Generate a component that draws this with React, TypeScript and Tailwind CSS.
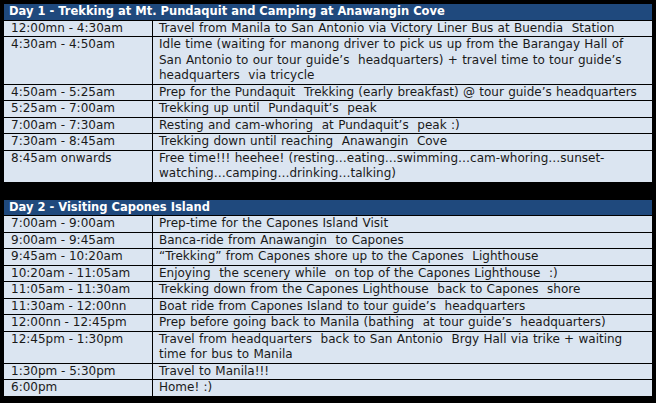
import React from 'react';

interface Row {
  time: string;
  lines: string[];
}

const day1: Row[] = [
  { time: '12:00mn - 4:30am', lines: ['Travel from Manila to San Antonio via Victory Liner Bus at Buendia  Station'] },
  {
    time: '4:30am - 4:50am',
    lines: [
      'Idle time (waiting for manong driver to pick us up from the Barangay Hall of',
      'San Antonio to our tour guide’s  headquarters) + travel time to tour guide’s',
      'headquarters  via tricycle',
    ],
  },
  { time: '4:50am - 5:25am', lines: ['Prep for the Pundaquit  Trekking (early breakfast) @ tour guide’s headquarters'] },
  { time: '5:25am - 7:00am', lines: ['Trekking up until  Pundaquit’s  peak'] },
  { time: '7:00am - 7:30am', lines: ['Resting and cam-whoring  at Pundaquit’s  peak :)'] },
  { time: '7:30am - 8:45am', lines: ['Trekking down until reaching  Anawangin  Cove'] },
  {
    time: '8:45am onwards',
    lines: [
      'Free time!!! heehee! (resting…eating…swimming…cam-whoring…sunset-',
      'watching…camping…drinking…talking)',
    ],
  },
];

const day2: Row[] = [
  { time: '7:00am - 9:00am', lines: ['Prep-time for the Capones Island Visit'] },
  { time: '9:00am - 9:45am', lines: ['Banca-ride from Anawangin  to Capones'] },
  { time: '9:45am - 10:20am', lines: ['“Trekking” from Capones shore up to the Capones  Lighthouse'] },
  { time: '10:20am - 11:05am', lines: ['Enjoying  the scenery while  on top of the Capones Lighthouse  :)'] },
  { time: '11:05am - 11:30am', lines: ['Trekking down from the Capones Lighthouse  back to Capones  shore'] },
  { time: '11:30am - 12:00nn', lines: ['Boat ride from Capones Island to tour guide’s  headquarters'] },
  { time: '12:00nn - 12:45pm', lines: ['Prep before going back to Manila (bathing  at tour guide’s  headquarters)'] },
  {
    time: '12:45pm - 1:30pm',
    lines: ['Travel from headquarters  back to San Antonio  Brgy Hall via trike + waiting', 'time for bus to Manila'],
  },
  { time: '1:30pm - 5:30pm', lines: ['Travel to Manila!!!'] },
  { time: '6:00pm', lines: ['Home! :)'] },
];

function Schedule({ title, rows }: { title: string; rows: Row[] }) {
  return (
    <div className="bg-[#dbe5f1] border border-black">
      <div className="bg-[#1f497d] text-white font-bold text-[11.5px] leading-[15.5px] px-[5px] border-b border-black">
        {title}
      </div>
      {rows.map((row, i) => (
        <div key={i} className={`flex text-[12px] leading-[15.5px] text-[#1a1a1a] ${i < rows.length - 1 ? 'border-b border-black' : ''}`}>
          <div className="w-[149px] shrink-0 border-r border-black pl-[7px]">{row.time}</div>
          <div className="flex-1 pl-[6px] whitespace-pre [word-spacing:0.5px]">
            {row.lines.map((line, j) => (
              <div key={j}>{line}</div>
            ))}
          </div>
        </div>
      ))}
    </div>
  );
}

export default function App() {
  return (
    <div className="w-[656px] h-[403px] bg-black px-[3px] pt-[3px] overflow-hidden" style={{ fontFamily: '"DejaVu Sans", Verdana, sans-serif' }}>
      <Schedule title="Day 1 - Trekking at Mt. Pundaquit and Camping at Anawangin Cove" rows={day1} />
      <div className="h-[16px]" />
      <Schedule title="Day 2 - Visiting Capones Island" rows={day2} />
    </div>
  );
}
